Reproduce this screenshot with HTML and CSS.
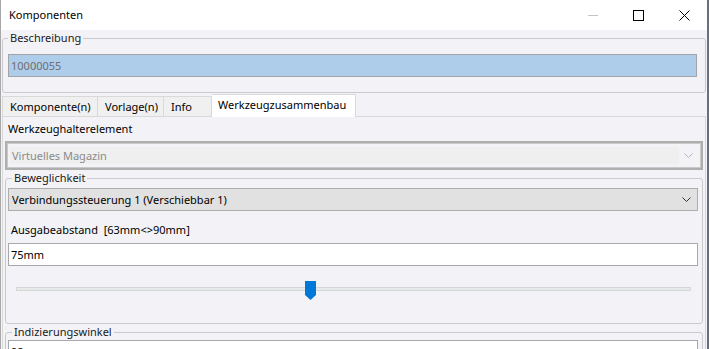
FILE: index.html
```html
<!DOCTYPE html>
<html lang="de">
<head>
    <meta charset="UTF-8">
    <title>Komponenten</title>
    <link rel="stylesheet" href="styles.css">
</head>
<body>
    <div class="window">
        <div class="titlebar">
            <span class="title">Komponenten</span>
            <div class="controls">
                <span class="ctl ctl-min">
                    <svg width="10" height="10" viewBox="0 0 10 10"><path d="M0 5.5H10" stroke="#c4c4c4" stroke-width="1"/></svg>
                </span>
                <span class="ctl">
                    <svg width="11" height="11" viewBox="0 0 11 11"><rect x="0.5" y="0.5" width="10" height="10" fill="none" stroke="#000" stroke-width="1"/></svg>
                </span>
                <span class="ctl">
                    <svg width="11" height="11" viewBox="0 0 11 11"><path d="M0.5 0.5L10.5 10.5M10.5 0.5L0.5 10.5" stroke="#000" stroke-width="1"/></svg>
                </span>
            </div>
        </div>

        <div class="content">
            <fieldset class="group group-top">
                <legend>Beschreibung</legend>
                <div class="textbox textbox-selected">10000055</div>
            </fieldset>

            <!-- Tabs -->
            <div class="tabs">
                <div class="tab tab-komp">Komponente(n)</div>
                <div class="tab tab-vorlage">Vorlage(n)</div>
                <div class="tab tab-info">Info</div>
                <div class="tab tab-active">Werkzeugzusammenbau</div>
            </div>

            <div class="tab-panel">
                <div class="label">Werkzeughalterelement</div>
                <div class="combo combo-disabled">
                    <span class="combo-field">Virtuelles Magazin</span>
                    <svg class="chevron" width="9" height="5" viewBox="0 0 9 5"><path d="M0.5 0.5L4.5 4.5L8.5 0.5" fill="none" stroke="#b5b5b5" stroke-width="1"/></svg>
                </div>

                <fieldset class="group group-inner">
                    <legend>Beweglichkeit</legend>
                    <div class="combo">
                        <span class="combo-text">Verbindungssteuerung 1 (Verschiebbar 1)</span>
                        <svg class="chevron" width="9" height="5" viewBox="0 0 9 5"><path d="M0.5 0.5L4.5 4.5L8.5 0.5" fill="none" stroke="#333" stroke-width="1"/></svg>
                    </div>
                    <div class="label label-range">Ausgabeabstand&nbsp; [63mm&lt;&gt;90mm]</div>
                    <div class="textbox">75mm</div>
                    <div class="slider">
                        <div class="track"></div>
                        <svg class="thumb" style="left: 42.8%" width="11" height="19" viewBox="0 0 11 19"><path d="M0 0H11V14L5.5 19L0 14Z" fill="#0078d7"/></svg>
                    </div>
                </fieldset>

                <fieldset class="group group-inner group-last">
                    <legend>Indizierungswinkel</legend>
                    <div class="textbox">98</div>
                </fieldset>
            </div>
        </div>
    </div>
</body>
</html>
```

FILE: styles.css
```css
* {
    box-sizing: border-box;
}
body {
    margin: 0;
    font-family: "Noto Sans", "Liberation Sans", sans-serif;
    font-size: 11px;
    color: #000;
    background: #f3f3f7;
    overflow: hidden;
}
.window {
    width: 709px;
    height: 349px;
    border-left: 1px solid #a8a8a8;
    border-right: 2px solid #67707f;
    background: #f3f3f7;
    overflow: hidden;
}
.titlebar {
    display: flex;
    align-items: center;
    justify-content: space-between;
    height: 30px;
    background: #fff;
}
.title {
    padding-left: 8px;
    line-height: 16px;
}
.controls {
    display: flex;
}
.ctl {
    display: flex;
    align-items: center;
    justify-content: center;
    width: 46px;
    height: 30px;
}
.ctl-min svg {
    margin-left: 1px;
}
.content {
    display: flex;
    flex-direction: column;
}
/* Group boxes */
.group {
    margin: 0 1px;
    padding: 8px 8px 15px 5px;
    border: 1px solid #cacace;
    border-radius: 3px;
    min-width: 0;
}
.group legend {
    padding: 0 2px;
    line-height: 16px;
    color: #1a1a1a;
}
.group-inner {
    margin: 0 2px;
    padding: 2px 4px 17px 2px;
}
.group-inner legend {
    margin-left: 4px;
}
.group-last {
    padding-top: 0;
}
.textbox {
    height: 23px;
    padding: 0 2px;
    line-height: 21px;
    background: #fff;
    border: 1px solid #a8a8ac;
    white-space: nowrap;
}
.textbox-selected {
    background: #aecdeb;
    border-color: #a2a4a8;
    color: #6e6e6e;
}
/* Tabs */
.tabs {
    display: flex;
    align-items: flex-end;
    height: 22px;
    margin: 1px 1px 0 1px;
}
.tab {
    height: 20px;
    padding: 0 7px;
    line-height: 20px;
    background: #f0f0f0;
    border: 1px solid #d9d9d9;
    border-bottom: none;
    white-space: nowrap;
}
.tab + .tab {
    border-left: none;
}
.tab-komp {
    width: 96px;
}
.tab-vorlage {
    width: 66px;
}
.tab-info {
    width: 48px;
}
.tab-active {
    position: relative;
    z-index: 1;
    width: 144px;
    height: 23px;
    margin-bottom: -1px;
    padding: 0 6px;
    line-height: 19px;
    background: #fff;
    border-left: 1px solid #d9d9d9;
}
.tab-panel {
    margin: 0 1px;
    padding: 4px 0 0 0;
    border: 1px solid #d9d9d9;
    border-bottom: none;
    height: 240px;
}
.label {
    margin-left: 5px;
    line-height: 16px;
}
/* Combo boxes */
.combo {
    display: flex;
    align-items: center;
    height: 23px;
    padding: 0 6px 0 3px;
    background: #e1e1e1;
    border: 1px solid #adadad;
}
.combo-text {
    flex: 1;
}
.combo-disabled {
    height: 29px;
    margin: 4px 2px 0 2px;
    padding: 0 8px 0 3px;
    background: #f3f3f7;
    border: 2px solid #aeaeae;
    box-shadow: inset 0 0 0 1px #c9c9c9;
}
.combo-field {
    flex: 1;
    height: 17px;
    margin-right: 5px;
    padding-left: 2px;
    line-height: 17px;
    background: #efefef;
    color: #8a8a8a;
}
.chevron {
    display: block;
}
.label-range {
    margin: 11px 0 5px 3px;
}
/* Slider */
.slider {
    position: relative;
    height: 40px;
    margin: 0 7px 0 8px;
}
.track {
    position: absolute;
    top: 21px;
    left: 0;
    right: 0;
    height: 4px;
    background: #e7eaea;
    border: 1px solid #d6d6d6;
}
.thumb {
    position: absolute;
    top: 15px;
}
```
